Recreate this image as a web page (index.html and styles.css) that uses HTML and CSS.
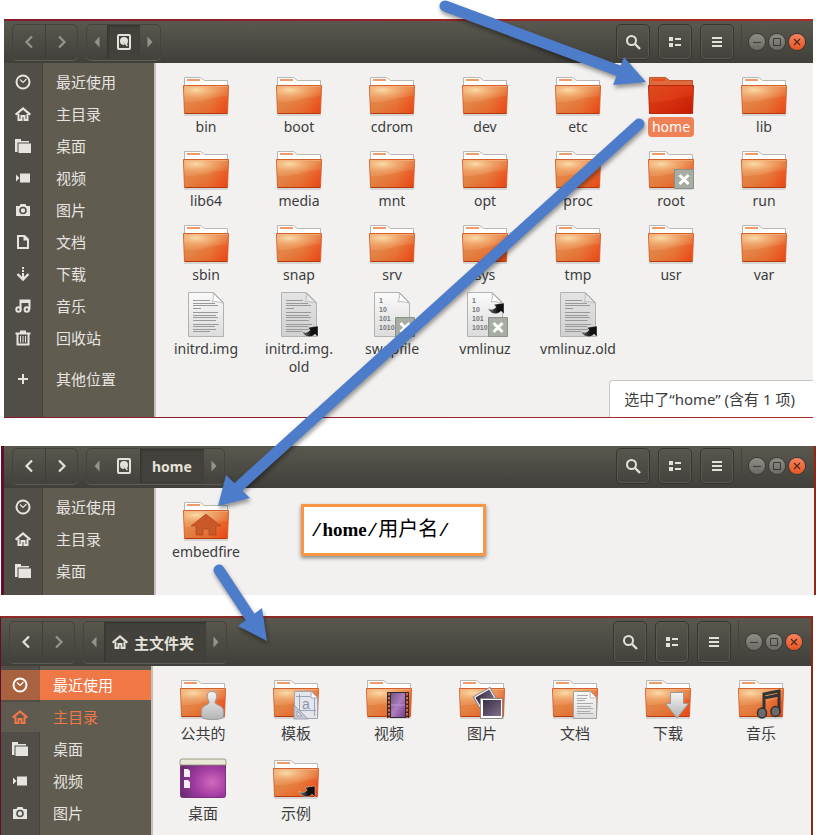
FILE: index.html
```html
<!DOCTYPE html>
<html lang="zh-CN">
<head>
<meta charset="utf-8">
<meta name="viewport" content="width=device-width, initial-scale=1">
<title>home</title>
<link rel="stylesheet" href="styles.css">
</head>
<body>
<svg class="defs" width="0" height="0" aria-hidden="true">
  <defs>
    <linearGradient id="g-front" x1="0" y1="0" x2="1" y2="1">
      <stop offset="0" stop-color="#e9a066"/><stop offset=".45" stop-color="#e98c52"/><stop offset=".8" stop-color="#ea5a25"/><stop offset="1" stop-color="#dc4815"/>
    </linearGradient>
    <radialGradient id="g-glow" cx=".28" cy=".25" r=".75">
      <stop offset="0" stop-color="#fbdcaa"/><stop offset="1" stop-color="#f09a58" stop-opacity="0"/>
    </radialGradient>
    <linearGradient id="g-low" x1="0" y1="0" x2="1" y2="0">
      <stop offset="0" stop-color="#d8702c" stop-opacity=".4"/><stop offset=".6" stop-color="#e0762f" stop-opacity=".4"/><stop offset="1" stop-color="#ee4413" stop-opacity=".4"/>
    </linearGradient>
    <linearGradient id="g-hot" x1="0" y1="0" x2="1" y2="1">
      <stop offset="0" stop-color="#dd4a1e"/><stop offset=".5" stop-color="#de3a15"/><stop offset="1" stop-color="#cb1c05"/>
    </linearGradient>
    <linearGradient id="g-paper" x1="0" y1="0" x2="0" y2="1">
      <stop offset="0" stop-color="#fafafa"/><stop offset="1" stop-color="#dcdcdc"/>
    </linearGradient>
    <linearGradient id="g-silver" x1="0" y1="0" x2="0" y2="1">
      <stop offset="0" stop-color="#f4f4f4"/><stop offset="1" stop-color="#b4b4b4"/>
    </linearGradient>
    <linearGradient id="g-film" x1="0" y1="0" x2="1" y2="1">
      <stop offset="0" stop-color="#74558a"/><stop offset=".5" stop-color="#ad7dbd"/><stop offset="1" stop-color="#77408d"/>
    </linearGradient>
    <linearGradient id="g-photo" x1="0" y1="0" x2="1" y2="1">
      <stop offset="0" stop-color="#382c43"/><stop offset="1" stop-color="#81708a"/>
    </linearGradient>
    <linearGradient id="g-link" x1="0" y1="0" x2="1" y2="0">
      <stop offset="0" stop-color="#777"/><stop offset=".6" stop-color="#111"/>
    </linearGradient>
    <radialGradient id="g-desk" cx=".7" cy=".6" r=".75">
      <stop offset="0" stop-color="#d069bd"/><stop offset=".5" stop-color="#a23ca2"/><stop offset="1" stop-color="#6a2b70"/>
    </radialGradient>
  </defs>

  <symbol id="folder" viewBox="0 0 48 48">
    <path d="M2 46h44" stroke="#bbb" stroke-width="1"/>
    <path d="M2.500 18V8.500h16l4 3h23V18z" fill="#fff" stroke="#b9b6b3"/>
    <path d="M5 11h13" stroke="#ef9a68" stroke-width="2"/>
    <path d="M1.500 16.500h45L45.500 44.500h-43z" fill="url(#g-front)" stroke="#d4622f"/>
    <path d="M2 17h44v10C31 28 18 34 2 33z" fill="url(#g-glow)"/>
    <path d="M2 33c16 1 29-5 44-6l-1 17H3z" fill="url(#g-low)"/>
    <path d="M2 17.500h44" stroke="#f6b685" stroke-opacity=".6"/>
    <path d="M3 44.500h42" stroke="#b63a0c"/>
  </symbol>
  <symbol id="folder-hot" viewBox="0 0 48 48">
    <path d="M2.500 18V8.500h16l4 3h23V18z" fill="#de6a3e" stroke="#c2532e"/>
    <path d="M5 11h13" stroke="#e44b1d" stroke-width="2"/>
    <path d="M1.500 16.500h45L45.500 44.500h-43z" fill="url(#g-hot)" stroke="#b62a0c"/>
    <path d="M2 33c16 1 29-5 44-6l-1 17H3z" fill="#b91000" fill-opacity=".2"/>
  </symbol>
  <symbol id="page" viewBox="0 0 48 48">
    <path d="M6.500 1.500h25l10 10v34h-35z" fill="url(#g-paper)" stroke="#b2b2b2"/>
    <path d="M31 2c1 4 0 7-1 9 3-1 7 0 11 1z" fill="#fff" stroke="#bcbcbc"/>
  </symbol>
  <symbol id="lines" viewBox="0 0 48 48">
    <path d="M11 9.500h17M11 12.500h22M11 14.500h25M11 17.500h8M11 21.500h25M11 24.500h23M11 26.500h25M11 29.500h23M11 33.500h26M11 35.500h22M11 38.500h23M11 40.500h17" stroke="#999" stroke-width="1"/>
  </symbol>
  <symbol id="lock" viewBox="0 0 48 48">
    <path d="M27.500 26.500h19v19h-19z" fill="#a8ada3" stroke="#8b9088"/>
    <path d="M32.500 32l9 9m0-9l-9 9" stroke="#fff" stroke-width="3"/>
  </symbol>
  <symbol id="link" viewBox="0 0 18 13">
    <path d="M1 6c2 2 6 2 8-1L7 2.500 17 1v11l-3-3C11 13 3 13 1 6z" fill="url(#g-link)" stroke="#fff" stroke-opacity=".6" stroke-width=".6"/>
  </symbol>

  <symbol id="recent" viewBox="0 0 16 16"><circle cx="8" cy="8" r="6.500" fill="none" stroke="currentColor" stroke-width="2"/><path d="M5 5.500l3 3 3.500-3.500" fill="none" stroke="currentColor" stroke-width="1.200"/></symbol>
  <symbol id="house" viewBox="0 0 16 16"><path d="M.700 8.700L8 2.500l7.300 6.200" fill="none" stroke="currentColor" stroke-width="2.200"/><path d="M3.500 8v6h3v-4h3v4h3V8" fill="none" stroke="currentColor" stroke-width="2"/></symbol>
  <symbol id="desk" viewBox="0 0 16 16"><path d="M0 1h6v2h8v1.500H2.500V14H0z" fill="currentColor"/><path d="M3.500 5.500H16V15H3.500z" fill="currentColor"/></symbol>
  <symbol id="video" viewBox="0 0 16 16"><path d="M5 3.500h10v9H5zM1 4.500L4.500 8 1 11.500z" fill="currentColor"/></symbol>
  <symbol id="camera" viewBox="0 0 16 16"><path d="M1 4h3.500l1-2h5l1 2H15v10H1z" fill="currentColor"/><circle cx="8" cy="8.500" r="3" fill="none" stroke="#504e46" stroke-width="1.600"/></symbol>
  <symbol id="doc" viewBox="0 0 16 16"><path d="M3 2h6.500L13 5.500V14H3z" fill="none" stroke="currentColor" stroke-width="2"/><path d="M8.500 2v4.500H13V5L10 2z" fill="currentColor"/></symbol>
  <symbol id="down" viewBox="0 0 16 16"><path d="M7 1h2v2H7zM7 4h2v2H7zM7 7h2v5H7z" fill="currentColor"/><path d="M2.500 8L8 13.500 13.500 8" fill="none" stroke="currentColor" stroke-width="2.400"/></symbol>
  <symbol id="music" viewBox="0 0 16 16"><path d="M5.500 11.500V2.500h9v9M5.500 4h9" fill="none" stroke="currentColor" stroke-width="2"/><circle cx="3.500" cy="11.500" r="2.200" fill="none" stroke="currentColor" stroke-width="2"/><circle cx="11.800" cy="11.500" r="2.200" fill="none" stroke="currentColor" stroke-width="2"/></symbol>
  <symbol id="bin" viewBox="0 0 16 16"><path d="M.500 3.500h15M5 1.500h6" stroke="currentColor" stroke-width="2"/><path d="M2.500 4v10.500h11V4" fill="none" stroke="currentColor" stroke-width="2"/><path d="M5.500 6v6.500M8 6v6.500M10.500 6v6.500" stroke="currentColor"/></symbol>
  <symbol id="plus" viewBox="0 0 16 16"><path d="M8 3v10M3 8h10" stroke="currentColor" stroke-width="2"/></symbol>
  <symbol id="back" viewBox="0 0 16 16"><path d="M11 2.500L5.500 8l5.500 5.500" fill="none" stroke="currentColor" stroke-width="2.200"/></symbol>
  <symbol id="fore" viewBox="0 0 16 16"><path d="M5 2.500L10.500 8 5 13.500" fill="none" stroke="currentColor" stroke-width="2.200"/></symbol>
  <symbol id="tri-l" viewBox="0 0 16 16"><path d="M10.500 2.500v11L5.500 8z" fill="currentColor"/></symbol>
  <symbol id="tri-r" viewBox="0 0 16 16"><path d="M5.500 2.500v11l5-5.500z" fill="currentColor"/></symbol>
  <symbol id="disk" viewBox="0 0 16 16"><rect x="2" y="1" width="12" height="14" rx="1" fill="none" stroke="currentColor" stroke-width="2"/><circle cx="8" cy="7" r="4" fill="currentColor"/><path d="M7.500 7.500l1 4 3 1.500 1-2-3.500-.500z" fill="#45433d"/><path d="M8.500 8.500l3 3.500" stroke="currentColor" stroke-width="1.400"/></symbol>
  <symbol id="search" viewBox="0 0 16 16"><circle cx="6.500" cy="6.500" r="4.500" fill="none" stroke="currentColor" stroke-width="2"/><path d="M10 10l5 5" stroke="currentColor" stroke-width="2.400"/></symbol>
  <symbol id="list" viewBox="0 0 16 16"><path d="M2 3h4v4H2zM2 9h4v4H2zM8 4h6v2H8zM8 10h6v2H8z" fill="currentColor"/></symbol>
  <symbol id="menu" viewBox="0 0 16 16"><path d="M3 3h10v2H3zM3 7h10v2H3zM3 11h10v2H3z" fill="currentColor"/></symbol>
  <symbol id="w-min" viewBox="0 0 16 16"><path d="M4 8.500h8" stroke="#3c3b37"/></symbol>
  <symbol id="w-max" viewBox="0 0 16 16"><path d="M4.500 4.500h7v7h-7z" fill="none" stroke="#3c3b37"/></symbol>
  <symbol id="w-close" viewBox="0 0 16 16"><path d="M5 5l6 6m0-6l-6 6" stroke="#4b2a1a" stroke-width="1.200"/></symbol>
</svg>

<main class="page">
  <section class="window window-root" aria-label="/">
    <header class="bar">
      <div class="group">
        <button class="seg nav dim" aria-label="后退"><svg><use href="#back"/></svg></button>
        <button class="seg nav dim" aria-label="前进"><svg><use href="#fore"/></svg></button>
      </div>
      <div class="group">
        <button class="seg edge dim" aria-label="向左"><svg><use href="#tri-l"/></svg></button>
        <button class="seg crumb on" aria-label="计算机"><svg><use href="#disk"/></svg></button>
        <button class="seg edge dim" aria-label="向右"><svg><use href="#tri-r"/></svg></button>
      </div>
      <div class="tools">
        <button class="tool" aria-label="搜索"><svg><use href="#search"/></svg></button>
        <button class="tool" aria-label="视图"><svg><use href="#list"/></svg></button>
        <button class="tool" aria-label="菜单"><svg><use href="#menu"/></svg></button>
      </div>
      <div class="controls">
        <button class="ctl" aria-label="最小化"><svg><use href="#w-min"/></svg></button>
        <button class="ctl" aria-label="最大化"><svg><use href="#w-max"/></svg></button>
        <button class="ctl close" aria-label="关闭"><svg><use href="#w-close"/></svg></button>
      </div>
    </header>
    <div class="body">
      <nav class="side">
        <a href="#"><svg><use href="#recent"/></svg><span>最近使用</span></a>
        <a href="#"><svg><use href="#house"/></svg><span>主目录</span></a>
        <a href="#"><svg><use href="#desk"/></svg><span>桌面</span></a>
        <a href="#"><svg><use href="#video"/></svg><span>视频</span></a>
        <a href="#"><svg><use href="#camera"/></svg><span>图片</span></a>
        <a href="#"><svg><use href="#doc"/></svg><span>文档</span></a>
        <a href="#"><svg><use href="#down"/></svg><span>下载</span></a>
        <a href="#"><svg><use href="#music"/></svg><span>音乐</span></a>
        <a href="#"><svg><use href="#bin"/></svg><span>回收站</span></a>
        <a href="#" class="other"><svg><use href="#plus"/></svg><span>其他位置</span></a>
      </nav>
      <div class="files">
        <a class="file" href="#"><svg><use href="#folder"/></svg><span>bin</span></a>
        <a class="file" href="#"><svg><use href="#folder"/></svg><span>boot</span></a>
        <a class="file" href="#"><svg><use href="#folder"/></svg><span>cdrom</span></a>
        <a class="file" href="#"><svg><use href="#folder"/></svg><span>dev</span></a>
        <a class="file" href="#"><svg><use href="#folder"/></svg><span>etc</span></a>
        <a class="file picked" href="#"><svg><use href="#folder-hot"/></svg><span>home</span></a>
        <a class="file" href="#"><svg><use href="#folder"/></svg><span>lib</span></a>
        <a class="file" href="#"><svg><use href="#folder"/></svg><span>lib64</span></a>
        <a class="file" href="#"><svg><use href="#folder"/></svg><span>media</span></a>
        <a class="file" href="#"><svg><use href="#folder"/></svg><span>mnt</span></a>
        <a class="file" href="#"><svg><use href="#folder"/></svg><span>opt</span></a>
        <a class="file" href="#"><svg><use href="#folder"/></svg><span>proc</span></a>
        <a class="file" href="#"><svg><use href="#folder"/><use href="#lock"/></svg><span>root</span></a>
        <a class="file" href="#"><svg><use href="#folder"/></svg><span>run</span></a>
        <a class="file" href="#"><svg><use href="#folder"/></svg><span>sbin</span></a>
        <a class="file" href="#"><svg><use href="#folder"/></svg><span>snap</span></a>
        <a class="file" href="#"><svg><use href="#folder"/></svg><span>srv</span></a>
        <a class="file" href="#"><svg><use href="#folder"/></svg><span>sys</span></a>
        <a class="file" href="#"><svg><use href="#folder"/></svg><span>tmp</span></a>
        <a class="file" href="#"><svg><use href="#folder"/></svg><span>usr</span></a>
        <a class="file" href="#"><svg><use href="#folder"/></svg><span>var</span></a>
        <a class="file" href="#"><svg><use href="#page"/><use href="#lines"/></svg><span>initrd.img</span></a>
        <a class="file" href="#"><svg><use href="#page"/><path d="M7 2h24l10 10v33H7z" fill="#bbb" fill-opacity=".35"/><use href="#lines"/><use href="#link" x="26" y="34" width="18" height="13"/></svg><span>initrd.img.<br>old</span></a>
        <a class="file" href="#"><svg><use href="#page"/><g class="bits"><text x="11" y="12">1</text><text x="11" y="21">10</text><text x="11" y="30">101</text><text x="11" y="39">1010</text></g><use href="#lock"/></svg><span>swapfile</span></a>
        <a class="file" href="#"><svg><use href="#page"/><g class="bits"><text x="11" y="12">1</text><text x="11" y="21">10</text><text x="11" y="30">101</text><text x="11" y="39">1010</text></g><use href="#link" x="26" y="11" width="18" height="13"/><use href="#lock"/></svg><span>vmlinuz</span></a>
        <a class="file" href="#"><svg><use href="#page"/><path d="M7 2h24l10 10v33H7z" fill="#bbb" fill-opacity=".35"/><use href="#lines"/><use href="#link" x="26" y="34" width="18" height="13"/></svg><span>vmlinuz.old</span></a>
      </div>
      <div class="status">选中了“home” (含有 1 项)</div>
    </div>
  </section>

  <section class="window window-home" aria-label="/home">
    <header class="bar">
      <div class="group">
        <button class="seg nav" aria-label="后退"><svg><use href="#back"/></svg></button>
        <button class="seg nav" aria-label="前进"><svg><use href="#fore"/></svg></button>
      </div>
      <div class="group">
        <button class="seg edge dim" aria-label="向左"><svg><use href="#tri-l"/></svg></button>
        <button class="seg crumb" aria-label="计算机"><svg><use href="#disk"/></svg></button>
        <button class="seg crumb on named">home</button>
        <button class="seg edge dim" aria-label="向右"><svg><use href="#tri-r"/></svg></button>
      </div>
      <div class="tools">
        <button class="tool" aria-label="搜索"><svg><use href="#search"/></svg></button>
        <button class="tool" aria-label="视图"><svg><use href="#list"/></svg></button>
        <button class="tool" aria-label="菜单"><svg><use href="#menu"/></svg></button>
      </div>
      <div class="controls">
        <button class="ctl" aria-label="最小化"><svg><use href="#w-min"/></svg></button>
        <button class="ctl" aria-label="最大化"><svg><use href="#w-max"/></svg></button>
        <button class="ctl close" aria-label="关闭"><svg><use href="#w-close"/></svg></button>
      </div>
    </header>
    <div class="body">
      <nav class="side">
        <a href="#"><svg><use href="#recent"/></svg><span>最近使用</span></a>
        <a href="#"><svg><use href="#house"/></svg><span>主目录</span></a>
        <a href="#"><svg><use href="#desk"/></svg><span>桌面</span></a>
      </nav>
      <div class="files">
        <a class="file" href="#"><svg><use href="#folder"/><path d="M24 20l15 12h-5v9h-7v-6h-6v6h-7v-9H9z" fill="#c9592a" stroke="#a83f14" stroke-width=".6"/></svg><span>embedfire</span></a>
      </div>
      <p class="note">/<b>home</b>/<span>用户名</span>/</p>
    </div>
  </section>

  <section class="window window-user" aria-label="主文件夹">
    <header class="bar">
      <div class="group">
        <button class="seg nav" aria-label="后退"><svg><use href="#back"/></svg></button>
        <button class="seg nav dim" aria-label="前进"><svg><use href="#fore"/></svg></button>
      </div>
      <div class="group">
        <button class="seg edge dim" aria-label="向左"><svg><use href="#tri-l"/></svg></button>
        <button class="seg crumb on named"><svg><use href="#house"/></svg>主文件夹</button>
        <button class="seg edge dim" aria-label="向右"><svg><use href="#tri-r"/></svg></button>
      </div>
      <div class="tools">
        <button class="tool" aria-label="搜索"><svg><use href="#search"/></svg></button>
        <button class="tool" aria-label="视图"><svg><use href="#list"/></svg></button>
        <button class="tool" aria-label="菜单"><svg><use href="#menu"/></svg></button>
      </div>
      <div class="controls">
        <button class="ctl" aria-label="最小化"><svg><use href="#w-min"/></svg></button>
        <button class="ctl" aria-label="最大化"><svg><use href="#w-max"/></svg></button>
        <button class="ctl close" aria-label="关闭"><svg><use href="#w-close"/></svg></button>
      </div>
    </header>
    <div class="body">
      <nav class="side">
        <a href="#" class="hot"><svg><use href="#recent"/></svg><span>最近使用</span></a>
        <a href="#" class="here"><svg><use href="#house"/></svg><span>主目录</span></a>
        <a href="#"><svg><use href="#desk"/></svg><span>桌面</span></a>
        <a href="#"><svg><use href="#video"/></svg><span>视频</span></a>
        <a href="#"><svg><use href="#camera"/></svg><span>图片</span></a>
      </nav>
      <div class="files">
        <a class="file" href="#"><svg><use href="#folder"/><path d="M33 19.500c4 0 5 3 4.500 6 0 2-1.500 3-1.500 5 0 2.500 8 2.500 8.500 8 .500 3 0 6-1 7.500-4 2-16 2-20 0-1-1.500-1.500-4-1-7.500.500-5.500 7.500-5.500 7.500-8 0-2-1.500-3-1.500-5C28 22 29 19.500 33 19.500z" fill="url(#g-silver)" stroke="#999"/></svg><span>公共的</span></a>
        <a class="file" href="#"><svg><use href="#folder"/><path d="M22.500 19.500h17l6 6v21h-23z" fill="#e4e6ec" stroke="#a2a4b1"/><path d="M39 20v6h6" fill="#fff" stroke="#a2a4b1"/><path d="M27.500 22v20M42.500 26v18M24 24.500h14M24 38.500h20" stroke="#9ea3bb"/><text x="30" y="37" font-family="Liberation Sans" font-size="14" fill="#8d92aa">a</text><path d="M22 33l14 14H22zM25 39v5h5z" fill="#c7cad4" fill-rule="evenodd" stroke="#868a9c" stroke-width=".7"/></svg><span>模板</span></a>
        <a class="file" href="#"><svg><use href="#folder"/><path d="M22 20h22v26H22z" fill="#2f2b30"/><path d="M26 21h14v24H26z" fill="url(#g-film)"/><path d="M26 33h14" stroke="#d3a2de" stroke-width=".7"/><path d="M24 21v25M42 21v25" stroke="#d56c3d" stroke-width="2" stroke-dasharray="2.500 1.500"/></svg><span>视频</span></a>
        <a class="file" href="#"><svg><use href="#folder"/><g transform="rotate(-30 27 28)"><path d="M18.500 19.500h19v19h-19z" fill="#fff" stroke="#888"/><path d="M20 21h16v14H20z" fill="url(#g-photo)"/></g><path d="M22.500 26.500h22v20h-22z" fill="#fff" stroke="#888"/><path d="M25 28h18v16H25z" fill="url(#g-photo)"/></svg><span>图片</span></a>
        <a class="file" href="#"><svg><use href="#folder"/><path d="M22.500 19.500h17l6 6v21h-23z" fill="url(#g-paper)" stroke="#a2a2a2"/><path d="M39 20v6h6" fill="#fff" stroke="#bbb"/><path d="M26 23.500h11M26 26.500h10M26 28.500h8M26 31.500h16M26 34.500h14M26 36.500h16M26 39.500h13M26 41.500h16" stroke="#aaa"/></svg><span>文档</span></a>
        <a class="file" href="#"><svg><use href="#folder"/><path d="M26.500 20.500h13v11h5L33 46 21.500 31.500h5z" fill="url(#g-silver)" stroke="#999"/></svg><span>下载</span></a>
        <a class="file" href="#"><svg><use href="#folder"/><path d="M27 40V22l15-3v20M27 26l15-3" fill="none" stroke="#353535" stroke-width="3"/><ellipse cx="25" cy="41" rx="4.500" ry="5" fill="#6c6c6c" stroke="#303030" stroke-width="1.500"/><ellipse cx="38.500" cy="39.500" rx="4.500" ry="5" fill="#6c6c6c" stroke="#303030" stroke-width="1.500"/></svg><span>音乐</span></a>
        <a class="file" href="#"><svg><rect x="1.500" y="7.500" width="45" height="38" rx="2" fill="url(#g-desk)" stroke="#77307a"/><path d="M1 13V9q0-2 2-2h42q2 0 2 2v4z" fill="#e9e7d6" stroke="#8d8a70" stroke-width=".8"/><path d="M5 17h4l2 2v6H5zM5 28h4l2 2v6H5z" fill="#f6eef6"/></svg><span>桌面</span></a>
        <a class="file" href="#"><svg><use href="#folder"/><use href="#link" x="26" y="33" width="18" height="13"/></svg><span>示例</span></a>
      </div>
    </div>
  </section>

  <svg class="arrows" width="816" height="835" aria-hidden="true">
    <g stroke="#4d7ccb" stroke-width="11" stroke-linecap="round" fill="#4d7ccb">
      <path d="M445 6L622 72"/><path d="M646 82L624 57 613 85z" stroke="none"/>
      <path d="M639 124L236 489"/><path d="M218 506L226 475 250 498z" stroke="none"/>
      <path d="M219 570L252 620"/><path d="M267 641L238 626 262 608z" stroke="none"/>
    </g>
  </svg>
</main>
</body>
</html>
```

FILE: styles.css
```css
* { box-sizing: border-box; }

body {
  margin: 0;
  background: #fff;
  font-family: "Noto Sans", "Noto Sans CJK SC", sans-serif;
  font-size: 14px;
  color: #3c3c3c;
}

a { color: inherit; text-decoration: none; }
svg { display: block; flex: none; }
.defs { position: absolute; }

.page {
  position: relative;
  overflow: hidden;
  padding-top: 19px;
}

.window-root {
  margin: 0 3px 28px 4px;
  border-top: 2px solid #8c1f2c;
  border-image: linear-gradient(90deg, #841a2c, #a82c20) 1;
  border-bottom: 1px solid #4a0f24;
}

.window-home {
  margin: 0 0 21px 1px;
  border-left: 3px solid #5f0f2c;
  border-right: 2px solid #8c2814;
}

.window-user {
  margin: 0 3px 0 0;
  border: 0 solid #8c2814;
  border-width: 2px 2px 0 1px;
  border-color: #8f2a24 #8c2814 #8f2a24 #5f0f2c;
}

/* Header bar */
.bar {
  display: flex;
  align-items: stretch;
  height: 42px;
  padding: 3px 8px;
  background: linear-gradient(#5a584e, #403f3a);
  color: #e4e1da;
}
.window-home .bar, .window-user .bar { padding-right: 9px; }
.window-home .bar { padding-top: 2px; padding-bottom: 4px; }
.window-user .bar { height: 48px; }

button {
  margin: 0;
  padding: 0;
  border: 0;
  background: none;
  color: inherit;
  font: inherit;
}

.group {
  display: flex;
  margin-right: 8px;
  border: 1px solid #45433c;
  border-radius: 5px;
  box-shadow: 0 1px #5e5c53;
}
.seg {
  display: flex;
  align-items: center;
  justify-content: center;
  gap: 6px;
}
.seg svg, .tool svg { width: 16px; height: 16px; }
.nav { width: 32px; }
.nav + .nav { border-left: 1px solid #403e38; }
.edge { width: 20px; }
.crumb { width: 33px; }
.on { background: #43413b; box-shadow: inset 1px 1px 2px #33322d; }
.named { width: auto; padding: 0 12px; font-weight: bold; }
.window-user .named { padding: 0 12px 0 8px; font-size: 15px; }
.dim { color: #96938a; }

.tools { display: flex; gap: 8px; margin-left: auto; }
.tool {
  display: flex;
  align-items: center;
  justify-content: center;
  width: 34px;
  border: 1px solid #35342f;
  border-radius: 5px;
  box-shadow: inset 0 0 0 1px #5c5a50;
}

.controls {
  display: flex;
  align-items: center;
  gap: 4px;
  margin-left: 7px;
  padding-left: 7px;
  border-left: 1px solid #45433d;
}
.ctl {
  width: 16px;
  height: 16px;
  border-radius: 50%;
  background: linear-gradient(#8f8d86, #6c6a64);
  box-shadow: 0 0 0 1px #3b3a35;
}
.ctl svg { width: 16px; height: 16px; }
.close { background: linear-gradient(#f7835e, #e95420); }

/* Places sidebar */
.body { position: relative; display: flex; background: #f2f1f0; }

.side {
  flex: none;
  width: 152px;
  padding: 3px 0 8px;
  border-right: 2px solid #c4bfbb;
  background: linear-gradient(90deg, #504e46 38px, #45433c 38px 39px, #615c50 39px);
  color: #e6e4e0;
  font-size: 15px;
}
.window-root .side { padding-bottom: 22px; }
.side a {
  display: grid;
  grid-template-columns: 38px 1fr;
  align-items: stretch;
  height: 32px;
  padding: 1px 0;
}
.side svg { width: 16px; height: 16px; place-self: center; }
.side span { padding-left: 14px; line-height: 30px; }
.side .other { margin-top: 9px; }
.side .hot {
  background: linear-gradient(90deg, #a9623f 39px, #f07746 39px) content-box;
  color: #fff;
}
.side .here {
  background: linear-gradient(90deg, #5f5a4f 39px, transparent 39px) content-box;
  color: #f07746;
}

/* Icon grid */
.files {
  flex: 1;
  display: grid;
  grid-template-columns: repeat(auto-fill, 92px);
  align-content: start;
  gap: 6px 1px;
  padding: 6px 0 0 4px;
}
.file { display: flex; flex-direction: column; align-items: center; text-align: center; }
.file svg { width: 48px; height: 48px; }
.file span { padding: 1px 4px; border-radius: 4px; line-height: 18px; }
.picked span { background: #f08055; color: #fff; }
.window-user .file span { font-size: 15px; line-height: 24px; }
.bits {
  fill: #777;
  font-family: "Liberation Sans", sans-serif;
  font-size: 7px;
  font-weight: bold;
}

.status {
  position: absolute;
  right: 0;
  bottom: 0;
  padding: 8px 18px 7px 14px;
  border: 1px solid #c8c5c2;
  border-width: 1px 0 0 1px;
  border-radius: 4px 0 0 0;
  background: #fff;
  font-size: 15px;
  line-height: 21px;
  white-space: nowrap;
}

.note {
  position: absolute;
  left: 297px;
  top: 16px;
  width: 185px;
  height: 52px;
  margin: 0;
  padding-left: 7px;
  border: 3px solid #f79646;
  background: #fff;
  box-shadow: 0 2px 4px rgba(0, 0, 0, .45);
  color: #000;
  font-family: "Liberation Mono", "Noto Sans CJK SC", monospace;
  font-size: 19px;
  line-height: 46px;
}
.note b { font-family: "Liberation Serif", serif; }
.note span { font-size: 20px; }

.arrows {
  position: absolute;
  left: 0;
  top: 0;
  pointer-events: none;
  filter: drop-shadow(1px 3px 2px rgba(0, 0, 0, .4));
}
```
